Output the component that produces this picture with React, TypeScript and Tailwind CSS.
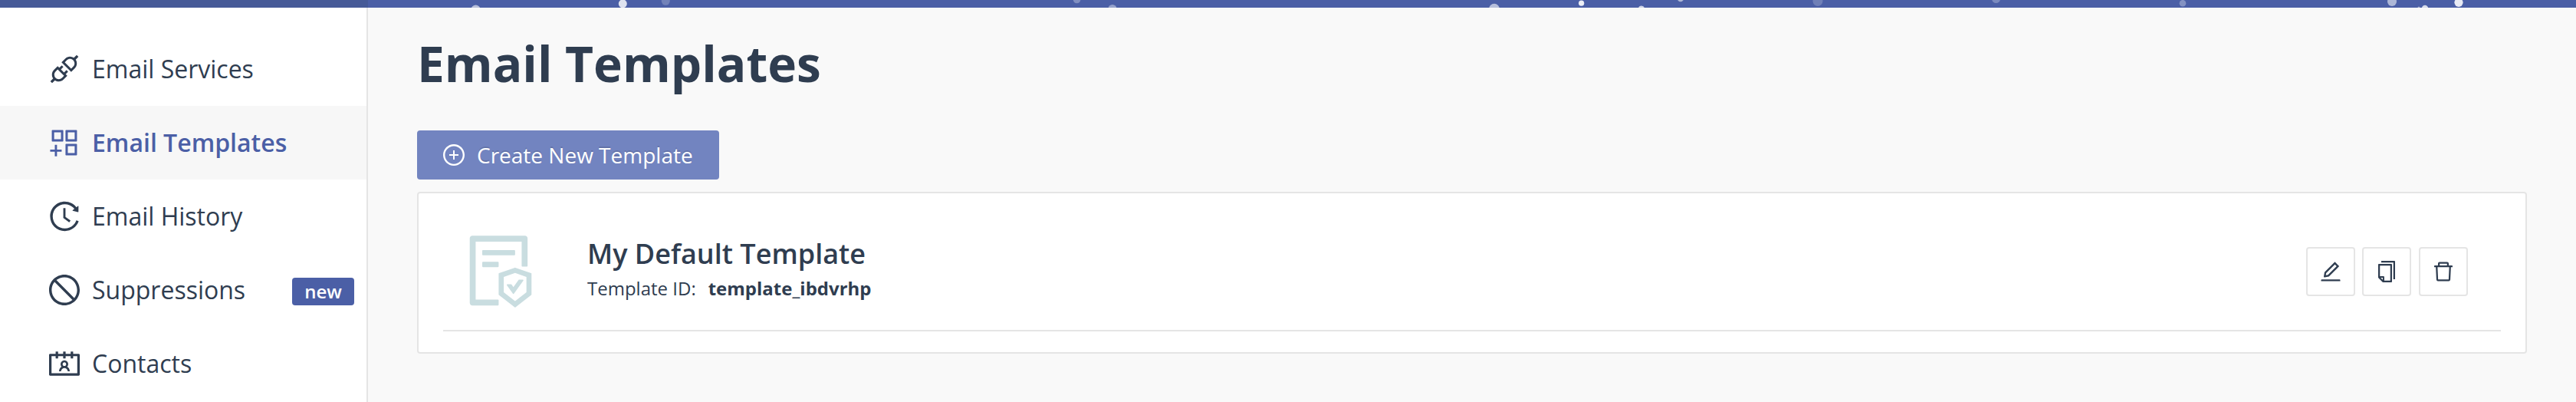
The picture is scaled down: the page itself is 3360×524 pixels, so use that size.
import type { ComponentType, SVGProps } from "react";
import {
  AiOutlineApi,
  AiOutlineAppstoreAdd,
  AiOutlineContacts,
  AiOutlineCopy,
  AiOutlineDelete,
  AiOutlineEdit,
  AiOutlineFileProtect,
  AiOutlineHistory,
  AiOutlinePlusCircle,
  AiOutlineStop,
} from "react-icons/ai";

const BOX = "64 64 896 896";

type Icon = ComponentType<SVGProps<SVGSVGElement>>;

const menu: { label: string; icon: Icon; active?: boolean; badge?: string }[] = [
  { label: "Email Services", icon: AiOutlineApi as Icon },
  { label: "Email Templates", icon: AiOutlineAppstoreAdd as Icon, active: true },
  { label: "Email History", icon: AiOutlineHistory as Icon },
  { label: "Suppressions", icon: AiOutlineStop as Icon, badge: "new" },
  { label: "Contacts", icon: AiOutlineContacts as Icon },
];

// cx, cy, r, opacity
const particles = [
  [620.5, 12.5, 6, 0.6],
  [812.3, 4.8, 5.5, 0.82],
  [868.3, 1.3, 5.5, 0.22],
  [1404.6, -0.5, 4.8, 0.3],
  [1451, 11.5, 5.5, 0.42],
  [1949, 11.5, 6.8, 0.6],
  [2062.7, 4.2, 3.6, 0.9],
  [2141, 11.5, 4, 0.75],
  [2192, -2, 4.2, 0.55],
  [2371, 1.5, 6.5, 0.2],
  [2603.6, -1.5, 5.5, 0.27],
  [2847, 4.2, 4.3, 0.32],
  [3120, 2, 6, 0.55],
  [3155, 10, 1.5, 0.5],
  [3163, 11, 4.2, 0.78],
  [3207, 3.3, 5.6, 0.88],
];

function TopBar() {
  return (
    <div className="relative flex h-[10px] w-full shrink-0 bg-[#4b5fa6]">
      <div className="h-full w-[480px] bg-[#465a97]" />
      <svg className="absolute inset-0 h-[10px] w-full" viewBox="0 0 3360 10" aria-hidden="true">
        {particles.map(([cx, cy, r, o]) => (
          <circle key={cx} cx={cx} cy={cy} r={r} fill="#fff" fillOpacity={o} />
        ))}
      </svg>
    </div>
  );
}

function Sidebar() {
  return (
    <nav className="w-[480px] shrink-0 overflow-hidden border-r-2 border-[#e5e5e5] bg-white pt-8">
      {menu.map(({ label, icon: Glyph, active, badge }) => (
        <a
          key={label}
          className={
            active
              ? "flex h-24 items-center bg-[#f7f7f7] pl-16 text-[32px] font-semibold text-[#4b5fa6]"
              : "flex h-24 items-center pl-16 text-[32px] text-[#2f3d50]"
          }
        >
          <Glyph viewBox={BOX} className="size-10 shrink-0" />
          <span className="ml-4 whitespace-nowrap leading-10">{label}</span>
          {badge && (
            <span className="mt-1 mr-4 ml-auto flex h-9 w-[81px] items-center justify-center rounded bg-[#4b5fa6] text-2xl font-semibold text-white">
              {badge}
            </span>
          )}
        </a>
      ))}
    </nav>
  );
}

function ActionButton({ icon: Glyph, label }: { icon: Icon; label: string }) {
  return (
    <button
      aria-label={label}
      className="flex size-16 items-center justify-center rounded border-2 border-[#e5e5e5] bg-white text-[#2f3d50]"
    >
      <Glyph viewBox={BOX} className="size-7" />
    </button>
  );
}

function TemplateCard() {
  return (
    <section className="mt-4 h-[211px] rounded border-2 border-[#e5e5e5] bg-white px-8">
      <div className="flex h-[180px] items-center border-b-2 border-[#e5e5e5] pr-[43px] pl-[27px]">
        <AiOutlineFileProtect viewBox={BOX} className="mt-[26px] size-24 shrink-0 text-[#c9dde0]" />
        <div className="ml-[65px] pt-5 text-[#2f3d50]">
          <h2 className="text-4xl font-semibold leading-[50px]">My Default Template</h2>
          <p className="flex text-2xl leading-10">
            Template ID:
            <strong className="ml-4 font-bold">template_ibdvrhp</strong>
          </p>
        </div>
        <div className="mt-[26px] ml-auto flex gap-[9.4px]">
          <ActionButton icon={AiOutlineEdit as Icon} label="Edit" />
          <ActionButton icon={AiOutlineCopy as Icon} label="Duplicate" />
          <div className="pl-[0.2px]">
            <ActionButton icon={AiOutlineDelete as Icon} label="Delete" />
          </div>
        </div>
      </div>
    </section>
  );
}

export default function App() {
  return (
    <div className="flex h-[524px] w-full flex-col overflow-hidden bg-[#f9f9f9] font-['Open_Sans',sans-serif]">
      <TopBar />
      <div className="flex min-h-0 flex-1">
        <Sidebar />
        <main className="flex-1 px-16 pt-8">
          <h1 className="text-[64px] font-bold leading-[82px] text-[#2f3d50]">Email Templates</h1>
          <button className="mt-[46px] flex h-16 w-[394px] items-center rounded bg-[#7284c0] pl-[34px] text-[28px] text-white">
            <AiOutlinePlusCircle viewBox={BOX} className="size-7 shrink-0" />
            <span className="ml-4 whitespace-nowrap leading-10 [text-shadow:0_-2px_0_rgba(0,0,0,0.12)]">
              Create New Template
            </span>
          </button>
          <TemplateCard />
        </main>
      </div>
    </div>
  );
}
